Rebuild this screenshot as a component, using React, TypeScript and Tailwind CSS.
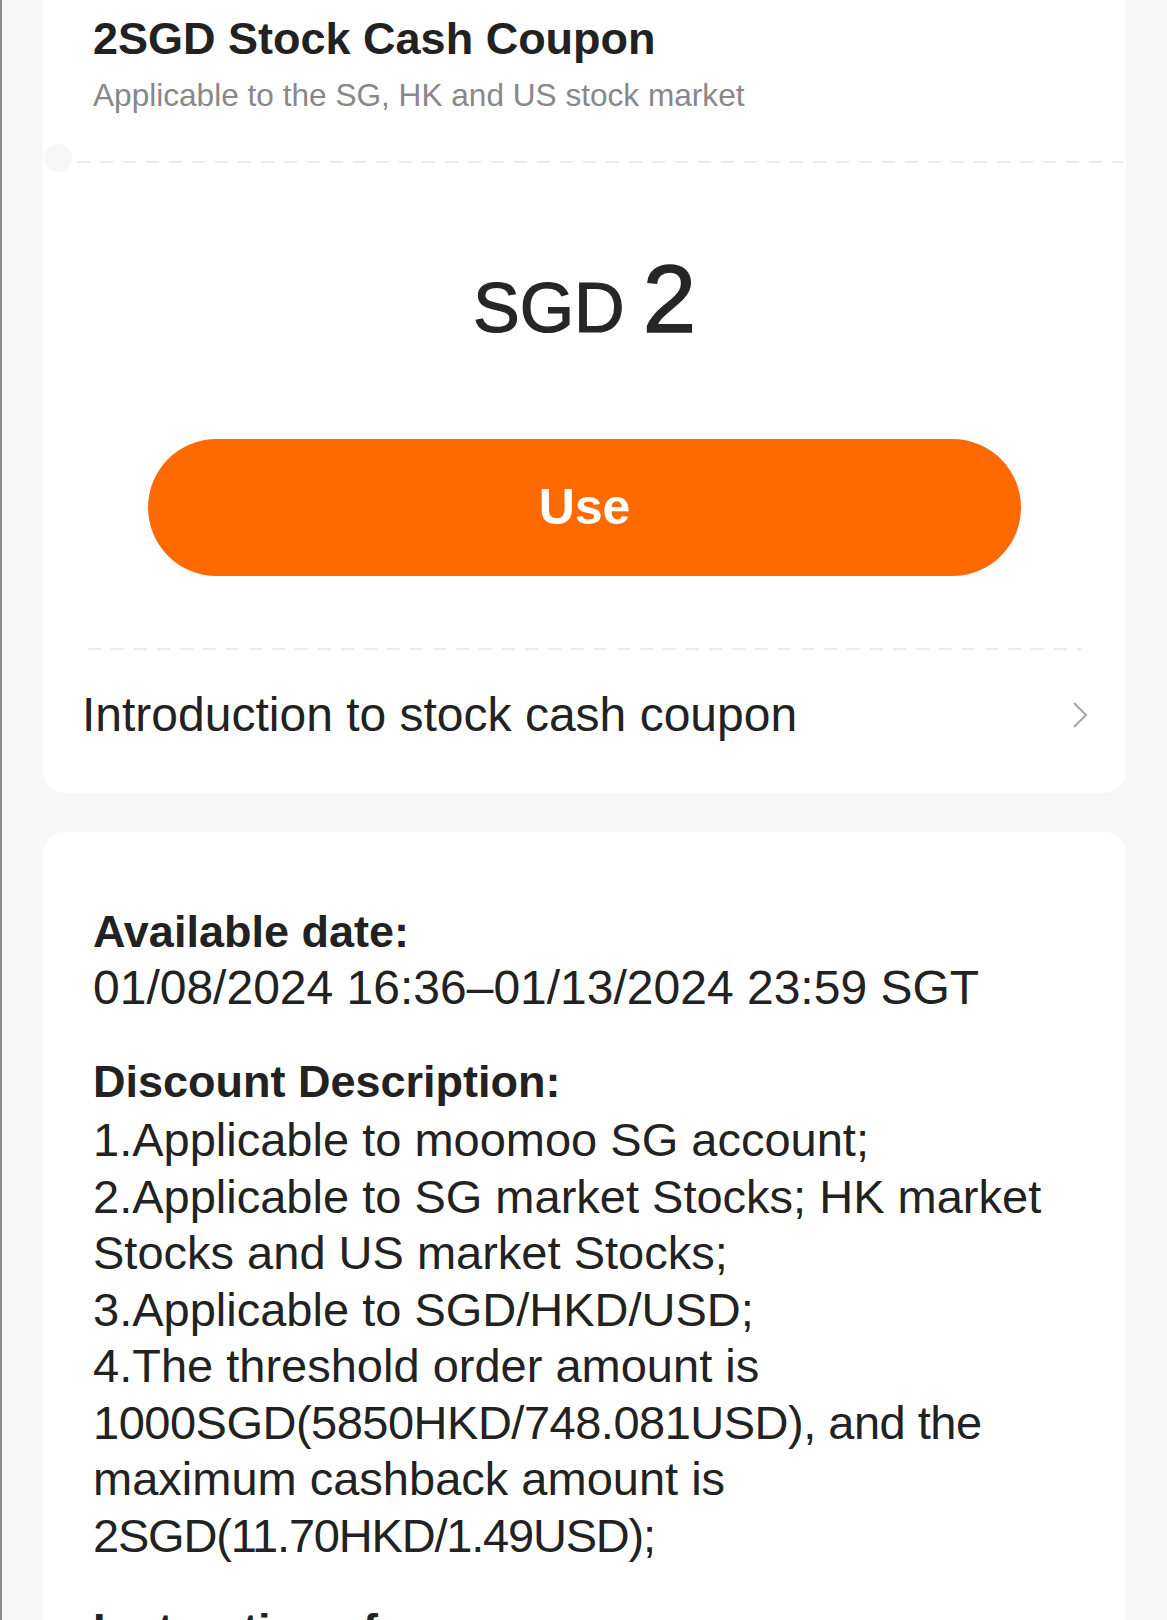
import React from "react";

const discountLines: { text: string; tight?: string }[] = [
  { text: "1.Applicable to moomoo SG account;" },
  { text: "2.Applicable to SG market Stocks; HK market" },
  { text: "Stocks and US market Stocks;" },
  { text: "3.Applicable to SGD/HKD/USD;" },
  { text: "4.The threshold order amount is" },
  { text: "1000SGD(5850HKD/748.081USD), and the", tight: "tracking-[-0.5px]" },
  { text: "maximum cashback amount is" },
  { text: "2SGD(11.70HKD/1.49USD);", tight: "tracking-[-1.2px]" },
];

function Dashed({ className = "" }: { className?: string }) {
  return (
    <div
      className={`h-[2px] bg-[linear-gradient(to_right,#ececec_0_13px,transparent_13px_23px)] bg-[length:23px_2px] bg-repeat-x ${className}`}
    />
  );
}

export default function App() {
  return (
    <div className="h-[1620px] overflow-hidden bg-[#f7f7f7] border-l-2 border-[#8c8c8c] font-['Liberation_Sans',Arial,sans-serif] text-[#222]">
      {/* 쿠폰 카드 */}
      <div className="ml-[41px] w-[1083px] bg-white rounded-b-[22px] pt-[12px] pb-[50px]">
        <div className="px-[50px]">
          <h1 className="text-[45px] leading-[54px] font-bold">2SGD Stock Cash Coupon</h1>
          <p className="mt-[9px] text-[31.6px] leading-[40px] text-[#888]">
            Applicable to the SG, HK and US stock market
          </p>
        </div>

        <div className="relative mt-[46px] h-[2px]">
          <div className="absolute left-[1px] top-[-17px] w-[28px] h-[28px] rounded-full bg-[#f6f6f6]" />
          <Dashed className="ml-[34px] mr-[3px]" />
        </div>

        <div className="mt-[88px] flex justify-center items-baseline text-[#262626]">
          <span className="text-[70px] leading-none [-webkit-text-stroke:1.2px_#262626]">SGD</span>
          <span className="ml-[18px] text-[96px] leading-none [-webkit-text-stroke:1.5px_#262626]">2</span>
        </div>

        <button className="mt-[92px] mx-[105px] w-[873px] h-[137px] rounded-full bg-[#ff6a00] text-white text-[50px] font-bold flex items-center justify-center">
          Use
        </button>

        <Dashed className="mt-[72px] mx-[45px]" />

        <div className="mt-[37px] pl-[39px] pr-[38px] flex items-center justify-between">
          <span className="text-[48px] leading-[56px]">Introduction to stock cash coupon</span>
          <svg width="16" height="26" viewBox="0 0 16 26" fill="none">
            <path d="M2 1 L14 13 L2 25" stroke="#a3a3a3" strokeWidth="2" />
          </svg>
        </div>
      </div>

      {/* 상세 설명 */}
      <div className="mt-[39px] ml-[41px] w-[1083px] bg-white rounded-t-[22px] pt-[72px] px-[50px]">
        <div>
          <h2 className="text-[45px] leading-[56px] font-bold">Available date:</h2>
          <p className="text-[48px] leading-[56px] whitespace-nowrap">
            01/08/2024 16:36–01/13/2024 23:59 SGT
          </p>
        </div>

        <div className="mt-[38px]">
          <h2 className="text-[45px] leading-[56px] font-bold">Discount Description:</h2>
          <div className="mt-[2px]">
            {discountLines.map((line, idx) => (
              <p
                key={idx}
                className={`text-[47px] leading-[56.5px] whitespace-nowrap ${line.tight ?? ""}`}
              >
                {line.text}
              </p>
            ))}
          </div>
        </div>

        <div className="mt-[38px]">
          <h2 className="text-[45px] leading-[56px] font-bold">Instructions for use:</h2>
        </div>
      </div>
    </div>
  );
}
